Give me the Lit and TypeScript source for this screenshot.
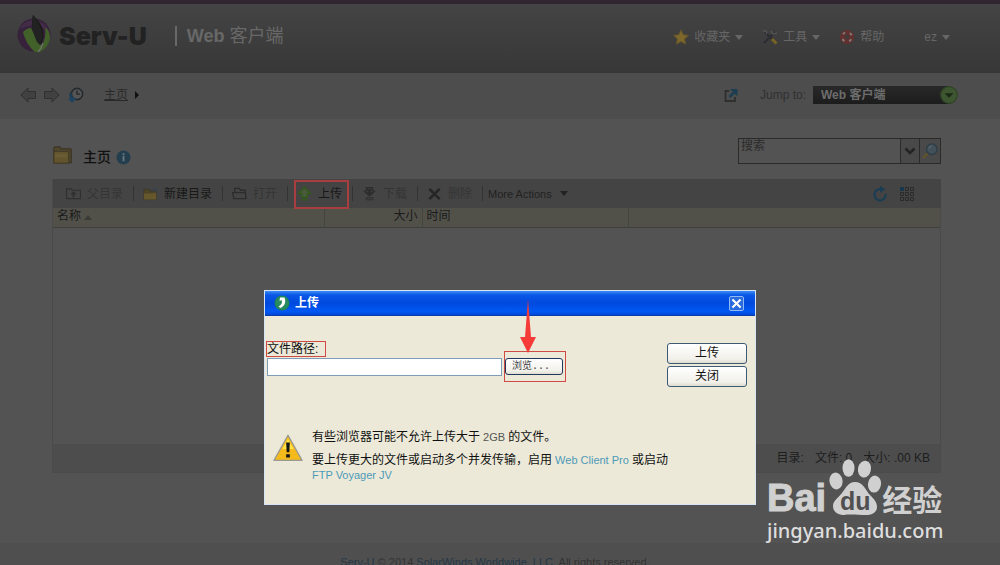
import { LitElement, html, css, svg } from "lit";
import { customElement, property } from "lit/decorators.js";

const caret = html`<svg class="caret" width="8" height="5" viewBox="0 0 8 5" aria-hidden="true"><path d="M0 0h8L4 5z" fill="currentColor" /></svg>`;

const icons: Record<string, unknown> = {
  star: svg`<path d="M8 1l2.200 4.800 5.200.6-3.900 3.500 1.100 5.200L8 12.500l-4.600 2.600 1.100-5.200L.6 6.400l5.200-.6z" fill="#7d672b" stroke="#66562b"/>`,
  tools: svg`<path d="M2 2l8 8M2 14l5-5 M9 7l4-4" stroke="#292c31" stroke-width="2" fill="none"/><path d="M9 2l2 3 4-1M1 2h3l1 3" stroke="#555" stroke-width="1.500" fill="none"/><path d="M10 10l4.500 4.500" stroke="#776326" stroke-width="3"/>`,
  help: svg`<circle cx="8" cy="8" r="7" fill="#62302e"/><circle cx="8" cy="8" r="4.800" fill="none" stroke="#817776" stroke-width="2" stroke-dasharray="2.600 4.940" stroke-dashoffset="-2.470"/><circle cx="8" cy="8" r="2.400" fill="#413b3b"/>`,
  back: svg`<path d="M.8 8L8 1v3.500h7.500v7H8V15z" fill="#414141" stroke="#303030"/>`,
  forward: svg`<path d="M15.200 8L8 1v3.500H.5v7H8V15z" fill="#414141" stroke="#303030"/>`,
  history: svg`<circle cx="9" cy="7" r="5.600" fill="#555" stroke="#252a2e" stroke-width="1.600"/><path d="M9 3.500V7.200h3" stroke="#262626" fill="none" stroke-width="1.300"/><path d="M3 6c-1 2-.5 4 1.500 6" stroke="#1e3d56" stroke-width="2.500" fill="none"/><path d="M0 12l4 3.800L8 12l-3-2z" fill="#1e4460"/>`,
  external: svg`<path d="M6 4H2.500v10h9.500v-4" fill="none" stroke="#2f2f2f" stroke-width="1.800"/><path d="M6.500 10L12 4.500" stroke="#1c3e50" stroke-width="2.600"/><path d="M7 2h7.500v7.500z" fill="#1c3e50"/>`,
  folder: svg`<path d="M1 4V2.500l1-1h4l1 1.500h7.500l.5 1v10H1z" fill="#51472c" stroke="#3b3525"/><path d="M1 5h12v9.500H1z" fill="#62552e" stroke="#443c28"/><path d="M2 7h10v3H2z" fill="#70623a" opacity=".5"/>`,
  info: svg`<circle cx="8" cy="8" r="7.500" fill="#233f4e"/><path d="M8 6.500V12M8 3.500v2" stroke="#68767d" stroke-width="2"/>`,
  parent: svg`<path d="M.5 13.500V3h5l1 1.500h9v9z" fill="none" stroke="#2f2f2f" stroke-width="1.200"/><path d="M8 5.500l3.500 3.500H9v3H7V9H4.500z" fill="#2f2f2f"/>`,
  newdir: svg`<path d="M1 14.500V3.500h5l1 2h7v9z" fill="#4e4526" stroke="#3d3828"/><path d="M1 8h10l3-1v7.500H1z" fill="#66582c"/><path d="M12.500 1v6M9.500 4h6" stroke="#39424a" stroke-width="1.500"/>`,
  open: svg`<path d="M3 7V2.500h5l1 2h5V7M.7 7h13.500L15 13.500H2z" fill="none" stroke="#2c2c2c" stroke-width="1.400"/>`,
  up: svg`<path d="M8 1.500L14.500 8H11v4H5V8H1.500z" fill="#4b5a3f" stroke="#33591d" stroke-width="1.800" stroke-linejoin="round"/><path d="M5 14.500h6" stroke="#33591d" stroke-width="1.800"/>`,
  down: svg`<path d="M4 1h8v4h3l-7 6.500L1 5h3z" fill="#2d2d2d"/><path d="M6 3h1.500M9 3h1.500M5 6h1.500M9.500 6H11" stroke="#4b4b4b"/><path d="M4.500 12.500h7v2.200h-7z" fill="none" stroke="#2d2d2d"/>`,
  remove: svg`<path d="M2.500 3l11 11M13.500 3L2.500 14" stroke="#262626" stroke-width="2.800"/>`,
  refresh: svg`<path d="M8.500 3.200A5.600 5.600 0 1 0 13.600 8" fill="none" stroke="#1b3d54" stroke-width="2.200"/><path d="M8 0l5.500 3.300L8 6.800z" fill="#1b3d54"/>`,
  grid: svg`<path d="M1 1h4v4H1z" fill="#18364c"/><path d="M6.500 1.500h3v3h-3zM11.500 1.500h3v3h-3zM1.500 6.500h3v3h-3zM6.500 6.500h3v3h-3zM11.500 6.500h3v3h-3zM1.500 11.500h3v3h-3zM6.500 11.500h3v3h-3zM11.500 11.500h3v3h-3z" fill="none" stroke="#2a2a2a"/>`,
  search: svg`<path d="M1 15l5-5" stroke="#5e5130" stroke-width="2.600"/><circle cx="9.800" cy="6.200" r="5.300" fill="#43525a" stroke="#2c3d47" stroke-width="1.300"/><path d="M7 6a3 3 0 0 1 3-3" stroke="#5b6a70" fill="none"/>`,
  chevron: svg`<path d="M3.500 5.500L8 10l4.500-4.500" stroke="#242424" stroke-width="2.600" fill="none"/>`,
  go: svg`<circle cx="8" cy="8" r="7.400" fill="#3d5631" stroke="#2f4524"/><path d="M4 6.500h8L8 10.500z" fill="#1c2915"/>`,
  logo: svg`<circle cx="17" cy="20" r="16.500" fill="#37223b"/><path d="M2 14C9 2 26 2 32 16L17 9z" fill="#432c47"/><path d="M16 0c7 7 12 14 10 24l-3 9C17 25 13 13 16 0z" fill="#1a1a1a"/><path d="M6 17q4-4 8-4l8 16 3 1c3-5 4-11 3-17 4 1 5 6 5 10-1 7-5 11-10 14h-5C12 32 8 25 6 17z" fill="#42612a"/><path d="M16 0c5 7 10 14 9 23l-2 7-3-3C16 19 14 9 16 0z" fill="#222"/><path d="M26 28c-1 3-2 6-5 9" stroke="#70756c" stroke-width="1.200" fill="none"/>`,
  badge: svg`<circle cx="8" cy="8" r="7.500" fill="#1b8459"/><circle cx="8" cy="8" r="6.500" fill="#278b5e"/><path d="M6 2.500h4.500c1.500 4 1 8-4 10.500l-2-1.500C8 9.500 8.500 7.500 7.500 5L5.500 6z" fill="#fff"/>`,
  cross: svg`<path d="M3 3l10 10M13 3L3 13" stroke="#fff" stroke-width="2.600"/>`,
  warn: svg`<path d="M8 1.200L15.500 14.600H.5z" fill="#f4b91a" stroke="#9a9a94" stroke-width=".7" stroke-linejoin="round"/><path d="M8 3.200L11 8.500H5z" fill="#ffe64a"/><path d="M7 5h2l-.3 5.300H7.300zM7 11.300h2v1.800H7z" fill="#151515"/>`,
};

@customElement("ui-icon")
class UiIcon extends LitElement {
  @property() name = "";
  @property() box = "0 0 16 16";
  static styles = css`
    :host { display: block; flex: none; width: 16px; height: 16px; }
    svg { display: block; width: 100%; height: 100%; }
  `;
  render() {
    return html`<svg viewBox=${this.box} aria-hidden="true">${icons[this.name]}</svg>`;
  }
}

@customElement("upload-dialog")
class UploadDialog extends LitElement {
  static styles = css`
    :host {
      display: block; box-sizing: border-box; background: #ece9d8; color: #111;
      border: 1px solid #d6e4f6; font: 12px/16px "Liberation Sans", "Noto Sans CJK SC", sans-serif;
    }
    .title {
      display: flex; align-items: center; gap: 5px; height: 25px; box-sizing: border-box; padding: 0 11px 0 9px;
      background: linear-gradient(#3b8cf5 0, #0a57e6 4px, #0049dd 12px, #0058f4 20px, #0049d8 100%);
      border-bottom: 1px solid #0a3ba8; color: #fff;
    }
    .title h2 { flex: 1; margin: 0; font-size: 12px; line-height: 16px; font-weight: 700; }
    .close {
      width: 15px; height: 15px; padding: 0; border: 1px solid #8fbaf5; border-radius: 2px; background: #2a6cdd;
      display: grid; place-items: center;
    }
    .close ui-icon { width: 13px; height: 13px; }
    .form { display: flex; justify-content: space-between; padding: 25px 8px 0 1px; }
    .field { display: flex; flex-direction: column; align-items: flex-start; }
    .mark { border: 1px solid #cf4a43; }
    .field label { font-size: 12px; line-height: 14px; padding: 0 7px 0 0; }
    .pick { display: flex; align-items: center; gap: 2px; padding-left: 1px; margin-top: -6px; }
    .pick input {
      width: 235px; height: 18px; box-sizing: border-box; border: 1px solid #7f9db9; background: #fff; padding: 0 3px;
    }
    .browse { padding: 6px 2px 6px 0; position: relative; }
    button { font: inherit; color: inherit; }
    .btn {
      display: block; box-sizing: border-box; width: 80px; height: 21px; padding: 0; border: 1px solid #3d5a75; border-radius: 3px;
      background: linear-gradient(#fff, #f1f0ea 80%, #dfdccf); line-height: 17px;
    }
    .browse .btn { width: 58px; height: 17px; font: 10px/13px "Liberation Mono", "Noto Sans CJK SC", monospace; color: #444; border-color: #22375d; text-align: left; padding-left: 6px; }
    .arrow { position: absolute; left: 15px; bottom: 28px; }
    .actions { display: grid; gap: 2px; align-content: start; padding-top: 2px; }
    .note { display: flex; gap: 9px; padding: 42px 8px 0 8px; }
    .note ui-icon { width: 30px; height: 30px; margin-top: 4px; }
    .note p { margin: 0 0 8px; }
    .note p + p { line-height: 15px; }
    .latin { font-size: 11px; }
    .num { color: #555; }
    a { color: #4d9ab8; text-decoration: none; }
  `;
  render() {
    return html`
      <header class="title">
        <ui-icon name="badge"></ui-icon>
        <h2>上传</h2>
        <button class="close" aria-label="关闭"><ui-icon name="cross"></ui-icon></button>
      </header>
      <div class="form">
        <div class="field">
          <label class="mark" for="path">文件路径:</label>
          <div class="pick">
            <input id="path" type="text" />
            <div class="browse mark">
              <button class="btn">浏览...</button>
              <svg class="arrow" width="16" height="54" viewBox="0 0 16 54" aria-hidden="true">
                <path d="M8 0L11 38h5L8 54 0 38h5z" fill="#f43b38" />
              </svg>
            </div>
          </div>
        </div>
        <div class="actions">
          <button class="btn">上传</button>
          <button class="btn">关闭</button>
        </div>
      </div>
      <div class="note">
        <ui-icon name="warn"></ui-icon>
        <div>
          <p>有些浏览器可能不允许上传大于<span class="latin num"> 2GB </span>的文件。</p>
          <p>要上传更大的文件或启动多个并发传输，启用<span class="latin"> <a href="#">Web Client Pro</a> </span>或启动<br /><a class="latin" href="#">FTP Voyager JV</a></p>
        </div>
      </div>
    `;
  }
}

@customElement("site-mark")
class SiteMark extends LitElement {
  static styles = css`
    :host { display: block; color: #d0d0d0; font-family: "Liberation Sans", "Noto Sans CJK SC", sans-serif; }
    .row { display: flex; align-items: flex-end; font-weight: 700; }
    .bai { font-size: 38px; line-height: 36px; -webkit-text-stroke: 1px #d0d0d0; }
    .cn { font-size: 30px; line-height: 36px; font-family: "Noto Sans CJK SC", sans-serif; font-weight: 700; }
    .url { font: 500 20px/24px "Noto Sans", sans-serif; color: #dedede; margin-top: 3px; }
    svg { flex: none; display: block; margin: 0 1px 0 3px; }
    .du { font: 700 25px "Liberation Sans", sans-serif; fill: #505050; }
  `;
  render() {
    return html`
      <div class="row">
        <span class="bai">Bai</span>
        <svg width="52" height="57" viewBox="0 0 52 57">
          <g fill="#d0d0d0">
            <ellipse cx="7" cy="22" rx="6.500" ry="8.500" transform="rotate(-10 7 22)" />
            <ellipse cx="19.500" cy="9" rx="6" ry="8.800" />
            <ellipse cx="35.500" cy="10" rx="6.500" ry="8.500" transform="rotate(12 35 10)" />
            <ellipse cx="45.500" cy="25" rx="6.500" ry="8.500" transform="rotate(8 45 25)" />
            <path d="M26 23c8 0 10 7 14 12 5 5 8 8 8 13 0 6-6 8-11 8-7 0-16-1-22 0-6 0-11-3-11-9 0-5 5-8 9-13 4-5 6-11 13-11z" />
          </g>
          <text class="du" x="11" y="51">du</text>
        </svg>
        <span class="cn">经验</span>
      </div>
      <div class="url">jingyan.baidu.com</div>
    `;
  }
}

const tool = (icon: string, label: string, cls = "") =>
  html`<button class="tool ${cls}"><ui-icon name=${icon}></ui-icon>${label}</button>`;

@customElement("app-root")
class AppRoot extends LitElement {
  static styles = css`
    :host {
      display: flex; flex-direction: column; position: relative; min-height: 100vh; overflow: hidden; box-sizing: border-box;
      background: #535353; color: #181818; font: 12px/16px "Liberation Sans", "Noto Sans CJK SC", sans-serif;
    }
    button, input, select { font: inherit; color: inherit; }
    button { background: none; border: 0; padding: 0; }
    .top {
      display: flex; align-items: center; box-sizing: border-box; height: 73px; padding: 0 50px 0 17px;
      border-top: 4px solid #302530; background: linear-gradient(#444, #373737);
    }
    .logo { width: 34px; height: 38px; margin-bottom: 10px; }
    .brand { font: 900 25px/30px Inter, "Liberation Sans", sans-serif; color: #222; margin: 0 28px 6px 8px; }
    .product {
      font-size: 18px; line-height: 20px; font-weight: 700; color: #686868; border-left: 2px solid #686868; padding-left: 10px; margin: 0 0 6px;
    }
    .product span { font-weight: 400; }
    .menu { display: flex; margin: 0 0 3px auto; }
    .menu button { display: flex; align-items: center; gap: 5px; color: #666; margin-left: 19px; }
    .menu button:last-child { margin-left: 40px; }
    .nav {
      display: flex; align-items: center; box-sizing: border-box; height: 46px; padding: 0 42px 3px 20px; background: #4d4d4d;
    }
    .nav .step { margin-right: 8px; }
    .nav a { color: #292929; margin: 0 7px 0 12px; }
    .tri { width: 4px; height: 8px; }
    .jump { display: flex; align-items: center; margin-left: auto; color: #303030; }
    .jump label { margin: 0 7px 0 21px; }
    .jump select {
      appearance: none; width: 144px; height: 18px; padding: 0 8px; border: 0; border-radius: 0 9px 9px 0; color: #6d6d6d; font-weight: 700;
      background: linear-gradient(#292929, #1c1c1c);
    }
    .jump .go { width: 18px; height: 18px; margin-left: -17px; pointer-events: none; }
    .main { padding: 18px 59px 0 52px; }
    .heading { display: flex; align-items: flex-start; height: 42px; }
    .heading .dir { width: 21px; height: 20px; margin-top: 8px; }
    .heading h1 { font-size: 14px; line-height: 18px; margin: 11px 5px 0 10px; font-weight: 500; color: #111; }
    .heading .info { width: 15px; height: 15px; margin-top: 13px; }
    .search { display: flex; margin: 1px 0 0 auto; height: 26px; box-sizing: border-box; border: 1px solid #2a2a2a; }
    .search input { width: 161px; box-sizing: border-box; border: 0; background: none; padding: 0 2px 10px; }
    .search input::placeholder { color: #2b2b2b; opacity: 1; }
    .search button { border-left: 1px solid #2a2a2a; background: #494949; padding: 0 1px; }
    .search button + button { padding: 0 2px; }
    .bar { display: flex; align-items: center; height: 29px; padding: 0 26px 0 4px; background: #444; border-left: 1px solid #4b4b4b; }
    .tool { display: flex; align-items: center; gap: 6px; padding: 0 10px 0 9px; border-right: 1px solid #333; line-height: 12px; color: #181818; }
    .tool ui-icon { width: 15px; height: 15px; }
    .tool.off { color: #353535; }
    .tool.more { border: 0; padding-left: 5px; font-size: 11px; gap: 8px; color: #222; }
    .view { margin-left: auto; display: flex; gap: 11px; }
    .panel { border: 1px solid #4b4b4b; border-top: 0; }
    table { width: 100%; border-collapse: collapse; table-layout: fixed; background: #51514a; }
    th { height: 19px; padding: 0 4px 3px; box-sizing: border-box; line-height: 16px; font-weight: 400; text-align: left; border-bottom: 1px solid #3f3f3b; border-right: 1px solid #454540; color: #1a1a1a; }
    th:last-child { border-right: 0; }
    .name { width: 271px; }
    .size { width: 98px; text-align: right; padding-right: 4px; }
    .time { width: 206px; }
    .sort { color: #3a3a36; }
    .list { height: 216px; }
    .status { display: flex; justify-content: flex-end; gap: 11px; height: 28px; align-items: center; padding-right: 10px; background: #4d4d4d; color: #1d1d1d; }
    .foot { margin-top: auto; height: 22px; padding: 11px 10px 0 0; box-sizing: border-box; background: #4f4f4f; text-align: center; font-size: 11px; color: #333; line-height: 16px; }
    .foot a { color: #253746; text-decoration: none; }
    upload-dialog { position: absolute; left: 264px; top: 290px; width: 492px; height: 215px; }
    .spot { position: absolute; left: 294px; top: 180px; width: 55px; height: 29px; box-sizing: border-box; border: 2px solid #a83e40; pointer-events: none; }
    site-mark { position: absolute; left: 767px; top: 459px; }
  `;
  render() {
    return html`
      <header class="top">
        <ui-icon class="logo" name="logo" box="0 0 34 38"></ui-icon>
        <div class="brand">Serv-U</div>
        <div class="product">Web <span>客户端</span></div>
        <nav class="menu">
          <button><ui-icon name="star"></ui-icon>收藏夹 ${caret}</button>
          <button><ui-icon name="tools"></ui-icon>工具 ${caret}</button>
          <button><ui-icon name="help"></ui-icon>帮助</button>
          <button>ez ${caret}</button>
        </nav>
      </header>
      <nav class="nav">
        <ui-icon class="step" name="back"></ui-icon>
        <ui-icon class="step" name="forward"></ui-icon>
        <ui-icon class="step" name="history"></ui-icon>
        <a href="#">主页</a>
        <svg class="tri" viewBox="0 0 4 8" aria-hidden="true"><path d="M0 0l4 4-4 4z" fill="#111" /></svg>
        <div class="jump">
          <ui-icon name="external"></ui-icon>
          <label for="jump">Jump to:</label>
          <select id="jump"><option>Web 客户端</option></select>
          <ui-icon class="go" name="go"></ui-icon>
        </div>
      </nav>
      <main class="main">
        <div class="heading">
          <ui-icon class="dir" name="folder"></ui-icon>
          <h1>主页</h1>
          <ui-icon class="info" name="info"></ui-icon>
          <div class="search">
            <input type="text" placeholder="搜索" aria-label="搜索" />
            <button aria-label="选项"><ui-icon name="chevron"></ui-icon></button>
            <button aria-label="搜索"><ui-icon name="search"></ui-icon></button>
          </div>
        </div>
        <div class="bar">
          ${tool("parent", "父目录", "off")}
          ${tool("newdir", "新建目录")}
          ${tool("open", "打开", "off")}
          ${tool("up", "上传")}
          ${tool("down", "下载", "off")}
          ${tool("remove", "删除", "off")}
          <button class="tool more">More Actions ${caret}</button>
          <div class="view">
            <button aria-label="刷新"><ui-icon name="refresh"></ui-icon></button>
            <button aria-label="视图"><ui-icon name="grid"></ui-icon></button>
          </div>
        </div>
        <div class="panel">
          <table>
            <thead>
              <tr><th class="name">名称 <svg class="sort" width="8" height="5" viewBox="0 0 8 5"><path d="M4 0l4 5H0z" fill="currentColor" /></svg></th><th class="size">大小</th><th class="time">时间</th><th></th></tr>
            </thead>
          </table>
          <div class="list"></div>
          <div class="status"><span>目录:</span><span>文件: 0</span><span>大小: .00 KB</span></div>
        </div>
      </main>
      <footer class="foot"><a href="#">Serv-U</a> © 2014 <a href="#">SolarWinds Worldwide, LLC</a>. All rights reserved.</footer>
      <div class="spot"></div>
      <upload-dialog role="dialog" aria-label="上传"></upload-dialog>
      <site-mark></site-mark>
    `;
  }
}
